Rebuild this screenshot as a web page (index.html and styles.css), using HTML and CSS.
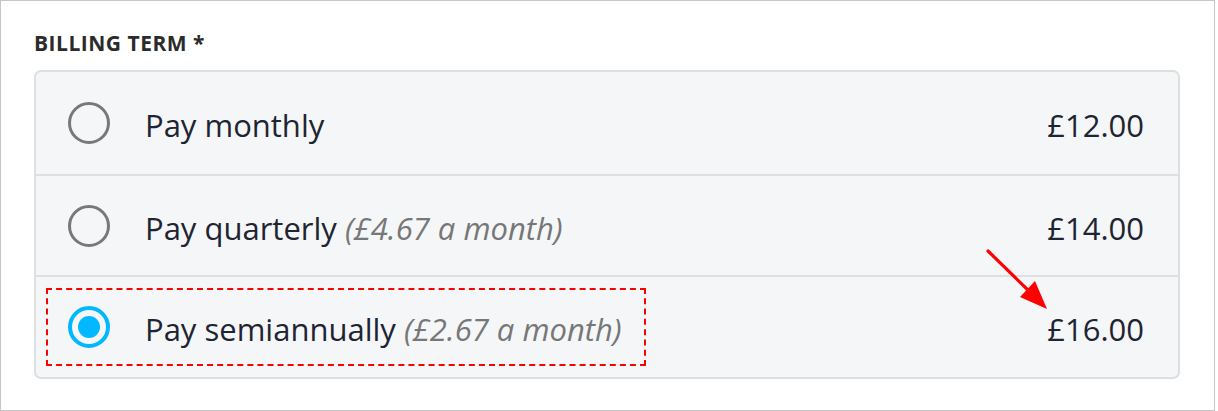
FILE: index.html
```html
<!DOCTYPE html>
<html>
<head>
<meta charset="utf-8">
<link rel="stylesheet" href="styles.css">
</head>
<body>
<div class="frame">
  <div class="label">BILLING TERM *</div>
  <div class="card">
    <div class="row first">
      <span class="radio"></span>
      <span class="name">Pay monthly</span>
      <span class="price">£12.00</span>
    </div>
    <div class="row second">
      <span class="radio"></span>
      <span class="name">Pay quarterly <em class="sub">(£4.67 a month)</em></span>
      <span class="price">£14.00</span>
    </div>
    <div class="row third">
      <div class="highlight">
        <span class="radio checked"></span>
        <span class="name">Pay semiannually <em class="sub">(£2.67 a month)</em></span>
      </div>
      <span class="price">£16.00</span>
      <svg class="arrow" width="70" height="70" viewBox="0 0 70 70">
        <line x1="3" y1="3" x2="48" y2="47" stroke="#ff0000" stroke-width="3.2" stroke-linecap="round"/>
        <polygon points="62,61 35,49 50,33" fill="#ff0000"/>
      </svg>
    </div>
  </div>
</div>
</body>
</html>
```

FILE: styles.css
```css
html, body {
  margin: 0;
  padding: 0;
  background: #ffffff;
}
body {
  font-family: "Open Sans", "Noto Sans", sans-serif;
  color: #1e2532;
}
.frame {
  box-sizing: border-box;
  width: 1215px;
  height: 411px;
  border: 1px solid #c6c6c6;
  padding: 28px 34px 0 33px;
}
.label {
  font-size: 21px;
  font-weight: 700;
  color: #2b2b2b;
  line-height: 28px;
  height: 41px;
  letter-spacing: 0.5px;
}
.card {
  width: 1146px;
  box-sizing: border-box;
  border: 2px solid #dedfe1;
  border-radius: 7px;
  background: #f5f6f8;
  overflow: hidden;
}
.row {
  position: relative;
  display: flex;
  align-items: center;
  padding: 0 34px 0 32px;
  border-top: 2px solid #dedfe1;
}
.row.first {
  border-top: none;
  height: 102px;
}
.row.second {
  height: 99px;
}
.row.third {
  height: 100px;
}
.radio {
  flex: none;
  box-sizing: border-box;
  width: 42px;
  height: 42px;
  border: 3px solid #787878;
  border-radius: 50%;
  margin-right: 35px;
  position: relative;
}
.radio.checked {
  border: 4px solid #00b8ff;
}
.radio.checked::after {
  content: "";
  position: absolute;
  left: 6px;
  top: 6px;
  width: 22px;
  height: 22px;
  border-radius: 50%;
  background: #00b8ff;
}
.name {
  font-size: 31px;
  flex: 1;
  white-space: nowrap;
  padding-top: 4px;
}
.sub {
  font-style: italic;
  color: #777777;
}
.price {
  font-size: 31px;
  white-space: nowrap;
  margin-left: auto;
  padding-top: 4px;
}
.highlight {
  flex: none;
  box-sizing: border-box;
  display: flex;
  align-items: center;
  margin-left: -22px;
  padding-left: 20px;
  width: 600px;
  height: 78px;
  border: 2px dashed #ff0000;
}
.highlight .name {
  flex: none;
}
.arrow {
  position: absolute;
  left: 949px;
  top: -29px;
}
```
